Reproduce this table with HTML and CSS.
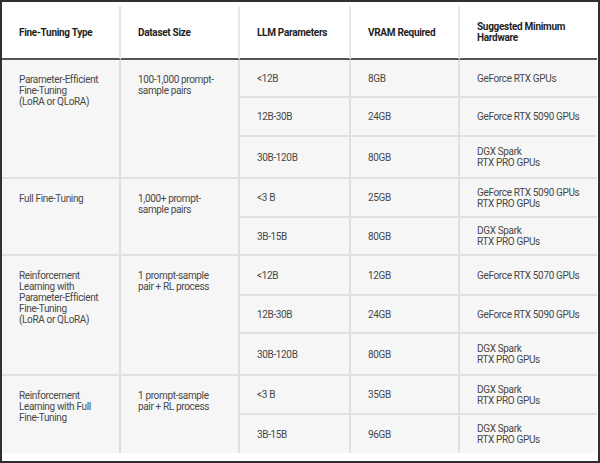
FILE: index.html
```html
<!DOCTYPE html>
<html>
<head>
<meta charset="utf-8">
<link rel="stylesheet" href="styles.css">
</head>
<body>
<div class="frame">
<table class="spec">
  <colgroup>
    <col class="c1"><col class="c2"><col class="c3"><col class="c4"><col class="c5">
  </colgroup>
  <thead>
    <tr>
      <th>Fine-Tuning Type</th>
      <th>Dataset Size</th>
      <th>LLM Parameters</th>
      <th>VRAM Required</th>
      <th class="last">Suggested Minimum<br>Hardware</th>
    </tr>
  </thead>
  <tbody>
    <tr class="h38">
      <td class="span" rowspan="3">Parameter-Efficient<br>Fine-Tuning<br>(LoRA or QLoRA)</td>
      <td class="span" rowspan="3">100-1,000 prompt-<br>sample pairs</td>
      <td>&lt;12B</td><td>8GB</td><td class="last">GeForce RTX GPUs</td>
    </tr>
    <tr class="h39"><td>12B-30B</td><td>24GB</td><td class="last">GeForce RTX 5090 GPUs</td></tr>
    <tr class="h42"><td>30B-120B</td><td>80GB</td><td class="last">DGX Spark<br>RTX PRO GPUs</td></tr>
    <tr class="h39">
      <td class="span" rowspan="2">Full Fine-Tuning</td>
      <td class="span" rowspan="2">1,000+ prompt-<br>sample pairs</td>
      <td>&lt;3 B</td><td>25GB</td><td class="last">GeForce RTX 5090 GPUs<br>RTX PRO GPUs</td>
    </tr>
    <tr class="h38"><td>3B-15B</td><td>80GB</td><td class="last">DGX Spark<br>RTX PRO GPUs</td></tr>
    <tr class="h40">
      <td class="span" rowspan="3">Reinforcement<br>Learning with<br>Parameter-Efficient<br>Fine-Tuning<br>(LoRA or QLoRA)</td>
      <td class="span" rowspan="3">1 prompt-sample<br>pair + RL process</td>
      <td>&lt;12B</td><td>12GB</td><td class="last">GeForce RTX 5070 GPUs</td>
    </tr>
    <tr class="h38"><td>12B-30B</td><td>24GB</td><td class="last">GeForce RTX 5090 GPUs</td></tr>
    <tr class="h42"><td>30B-120B</td><td>80GB</td><td class="last">DGX Spark<br>RTX PRO GPUs</td></tr>
    <tr class="h39">
      <td class="span bottom" rowspan="2">Reinforcement<br>Learning with Full<br>Fine-Tuning</td>
      <td class="span bottom" rowspan="2">1 prompt-sample<br>pair + RL process</td>
      <td>&lt;3 B</td><td>35GB</td><td class="last">DGX Spark<br>RTX PRO GPUs</td>
    </tr>
    <tr class="final h38"><td>3B-15B</td><td>96GB</td><td class="last">DGX Spark<br>RTX PRO GPUs</td></tr>
  </tbody>
</table>
</div>
</body>
</html>
```

FILE: styles.css
```css
* { box-sizing: border-box; }
html, body { margin: 0; padding: 0; background: #ffffff; }
.frame {
  width: 600px;
  height: 463px;
  border: 2px solid #2f2f2f;
  background: #ffffff;
  padding-top: 4px;
  overflow: hidden;
}
.spec {
  border-collapse: separate;
  border-spacing: 0;
  table-layout: fixed;
  width: 595px;
  font-family: Roboto, "Liberation Sans", sans-serif;
  font-size: 10px;
  line-height: 11px;
  letter-spacing: -0.35px;
  color: #484848;
}
.c1 { width: 119px; }
.c2 { width: 119px; }
.c3 { width: 111px; }
.c4 { width: 109px; }
.c5 { width: 137px; }
.spec th {
  height: 54px;
  padding: 0 8px 0 17px;
  text-align: left;
  vertical-align: middle;
  font-weight: 700;
  letter-spacing: -0.3px;
  color: #1e1e1e;
  background: #ffffff;
  border-right: 2px solid #e8e8e8;
  border-bottom: 2px solid #545454;
}
.spec th.last { border-right: none; }
.spec td {
  padding: 0 6px 0 17px;
  vertical-align: middle;
  background: #f6f6f6;
  border-right: 2px solid #e0e0e0;
  border-bottom: 2px solid #e0e0e0;
}
.spec tr.h38 td { height: 38px; }
.spec tr.h39 td { height: 39px; }
.spec tr.h40 td { height: 40px; }
.spec tr.h42 td { height: 42px; }
.spec td.last { border-right: none; }
.spec td.span { vertical-align: top; padding-top: 14px; }
.spec td.bottom, .spec tr.final td { border-bottom: none; }
```
